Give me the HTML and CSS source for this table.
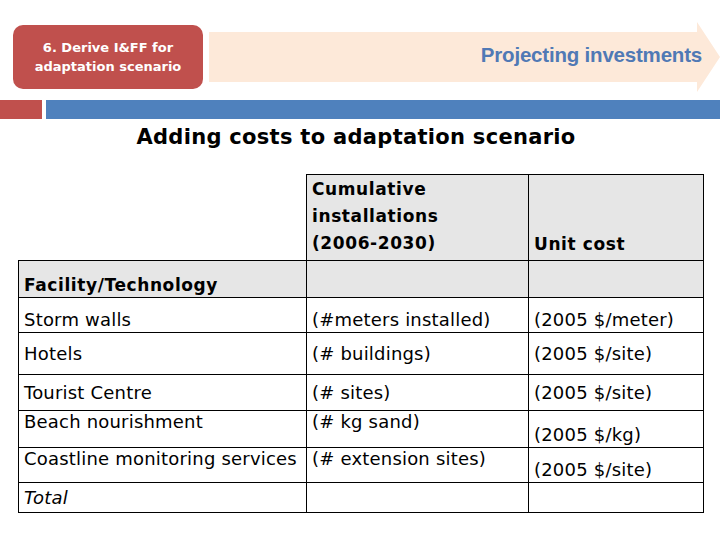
FILE: index.html
```html
<!DOCTYPE html>
<html>
<head>
<meta charset="utf-8">
<link rel="stylesheet" href="styles.css">
</head>
<body>
<header class="banner">
  <div class="step">6. Derive I&amp;FF for<br>adaptation scenario</div>
  <div class="arrow"><span class="arrow-text">Projecting investments</span></div>
</header>
<div class="bars"><div class="bar-red"></div><div class="bar-blue"></div></div>
<h1 class="title">Adding costs to adaptation scenario</h1>
<table class="costs">
  <colgroup><col class="c1"><col class="c2"><col class="c3"></colgroup>
  <tr class="r-head">
    <td class="blank"></td>
    <th class="gray top">Cumulative<br>installations<br>(2006-2030)</th>
    <th class="gray bottom">Unit cost</th>
  </tr>
  <tr class="r-fac">
    <th class="gray bottom">Facility/Technology</th>
    <td class="gray"></td>
    <td class="gray"></td>
  </tr>
  <tr class="r-storm">
    <td class="bottom">Storm walls</td>
    <td class="bottom">(#meters installed)</td>
    <td class="bottom">(2005 $/meter)</td>
  </tr>
  <tr class="r-hotels">
    <td>Hotels</td>
    <td>(# buildings)</td>
    <td>(2005 $/site)</td>
  </tr>
  <tr class="r-tourist">
    <td>Tourist Centre</td>
    <td>(# sites)</td>
    <td>(2005 $/site)</td>
  </tr>
  <tr class="r-beach">
    <td class="top">Beach nourishment</td>
    <td class="top">(# kg sand)</td>
    <td class="bottom">(2005 $/kg)</td>
  </tr>
  <tr class="r-coast">
    <td class="top">Coastline monitoring services</td>
    <td class="top">(# extension sites)</td>
    <td class="bottom">(2005 $/site)</td>
  </tr>
  <tr class="r-total">
    <td class="ital">Total</td>
    <td></td>
    <td></td>
  </tr>
</table>
</body>
</html>
```

FILE: styles.css
```css
html, body {
  margin: 0;
  padding: 0;
  background: #ffffff;
  width: 720px;
  height: 540px;
  overflow: hidden;
  font-family: "DejaVu Sans", sans-serif;
  color: #000;
}

.banner {
  display: flex;
  align-items: center;
  padding-top: 22px;
  height: 70px;
}

.step {
  margin-left: 13px;
  width: 190px;
  height: 64px;
  box-sizing: border-box;
  background: #c0504d;
  border-radius: 10px;
  color: #fff;
  font-family: "DejaVu Sans", sans-serif;
  font-weight: bold;
  font-size: 13px;
  line-height: 19px;
  display: flex;
  align-items: center;
  justify-content: center;
  text-align: center;
}

.arrow {
  margin-left: 6px;
  flex: 1;
  height: 70px;
  background: #fde9d9;
  clip-path: polygon(0 10px, calc(100% - 23px) 10px, calc(100% - 23px) 0, 100% 50%, calc(100% - 23px) 100%, calc(100% - 23px) 60px, 0 60px);
  display: flex;
  align-items: center;
  justify-content: flex-end;
  padding-right: 18px;
  padding-bottom: 5px;
  box-sizing: border-box;
}

.arrow-text {
  font-family: "Liberation Sans", Arial, sans-serif;
  font-weight: bold;
  font-size: 20.5px;
  color: #5079b5;
  letter-spacing: -0.2px;
}

.bars {
  display: flex;
  gap: 4px;
  margin-top: 8px;
  height: 19px;
}
.bar-red { width: 42px; background: #c0504d; }
.bar-blue { flex: 1; background: #4f81bd; }

.title {
  margin: 4px 0 0 0;
  text-align: center;
  font-family: "DejaVu Sans", sans-serif;
  font-weight: bold;
  font-size: 21px;
  letter-spacing: 0.3px;
  line-height: 28px;
  padding-right: 8px;
}

.costs {
  margin: 23px 0 0 18px;
  border-collapse: collapse;
  table-layout: fixed;
  width: 685px;
  font-size: 18px;
  letter-spacing: 0.2px;
}
.c1 { width: 288px; }
.c2 { width: 222px; }
.c3 { width: 175px; }

.costs td, .costs th {
  border: 1px solid #000;
  padding: 0 5px;
  text-align: left;
  vertical-align: middle;
  font-weight: normal;
  white-space: nowrap;
}
.costs th {
  font-weight: bold;
  font-size: 17px;
  letter-spacing: 0.6px;
}
.costs .blank { border: none; border-bottom: 1px solid #000; }
.costs .gray { background: #e6e6e6; }
.costs .top { vertical-align: top; }
.costs .bottom { vertical-align: bottom; padding-bottom: 2px; }
.costs .ital { font-style: italic; }

.r-head th { line-height: 27px; }
.r-head th.top { padding-top: 1px; }
.r-head { height: 86px; }
.r-fac { height: 37px; }
.r-storm { height: 35px; }
.r-hotels { height: 42px; }
.r-tourist { height: 36px; }
.r-beach { height: 37px; }
.r-coast { height: 35px; }
.r-total { height: 30px; }
```
